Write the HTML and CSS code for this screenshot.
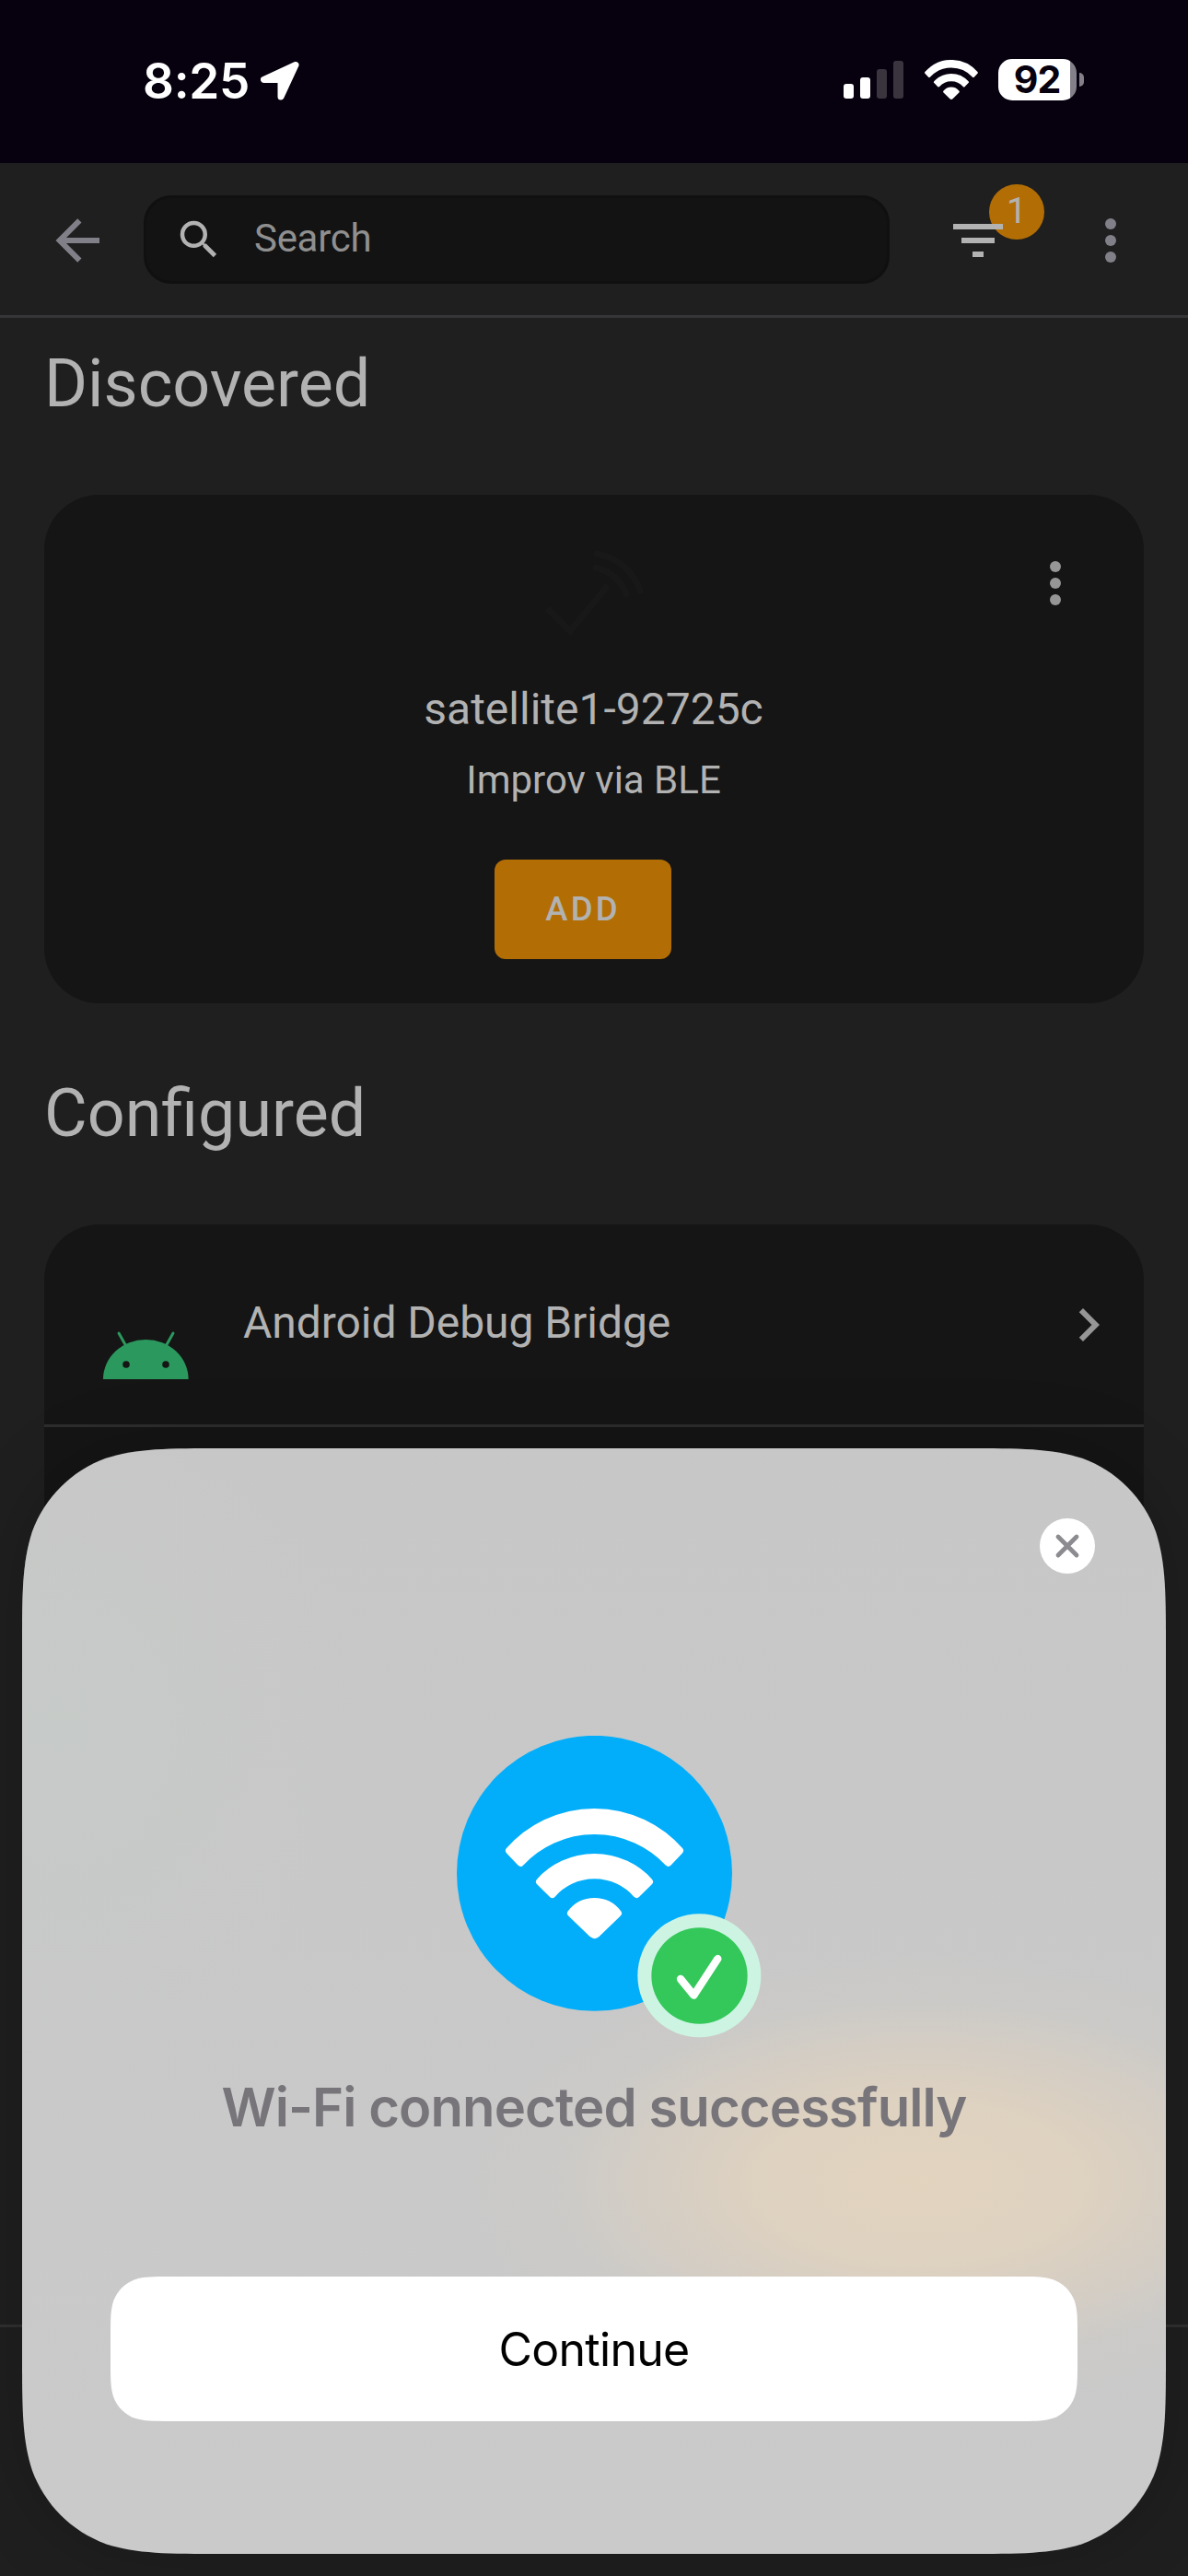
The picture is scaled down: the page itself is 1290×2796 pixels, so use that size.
FILE: index.html
```html
<!DOCTYPE html>
<html lang="en">
<head>
<meta charset="utf-8">
<title>Integrations</title>
<link rel="stylesheet" href="styles.css">
</head>
<body>
<div class="screen">
  <header class="status">
    <div class="status-left">
      <span class="time">8:25</span>
      <svg class="location" width="42" height="42" viewBox="0 0 42 42"><path d="M38 3.500L3.500 19.500H22V38Z" fill="#fff" stroke="#fff" stroke-width="7" stroke-linejoin="round"/></svg>
    </div>
    <div class="status-right">
      <svg class="signal" width="66" height="42" viewBox="0 0 66 42">
        <rect x="0" y="25" width="11" height="16" rx="3" fill="#fff"/>
        <rect x="18" y="18" width="11" height="23" rx="3" fill="#fff"/>
        <rect x="36" y="9" width="11" height="32" rx="3" fill="#3a343f"/>
        <rect x="54" y="0" width="11" height="41" rx="3" fill="#3a343f"/>
      </svg>
      <svg class="wifi" width="58" height="43" viewBox="296 339 582 424" preserveAspectRatio="none"><use href="#wifi-glyph"/></svg>
      <div class="battery"><span class="level">92</span></div>
      <span class="battery-cap"></span>
    </div>
  </header>

  <nav class="toolbar">
    <svg class="back" width="72" height="72" viewBox="0 0 24 24"><path fill="#818089" d="M20,11V13H8L13.5,18.5L12.08,19.92L4.16,12L12.08,4.08L13.5,5.5L8,11H20Z"/></svg>
    <div class="search">
      <svg width="54" height="54" viewBox="0 0 24 24"><path fill="#b2b2b2" d="M9.5,3A6.5,6.5 0 0,1 16,9.5C16,11.11 15.41,12.59 14.44,13.73L14.71,14H15.5L20.5,19L19,20.5L14,15.5V14.71L13.73,14.44C12.59,15.41 11.11,16 9.5,16A6.5,6.5 0 0,1 3,9.5A6.5,6.5 0 0,1 9.5,3M9.5,5C7,5 5,7 5,9.5C5,12 7,14 9.5,14C12,14 14,12 14,9.5C14,7 12,5 9.5,5Z"/></svg>
      <span>Search</span>
    </div>
    <div class="filter">
      <span class="count">1</span>
      <svg class="filter-icon" width="72" height="72" viewBox="0 0 24 24"><path fill="#b2b2b2" d="M3,6H21V8H3ZM6,11H18V13H6ZM10,16H14V18H10Z"/></svg>
    </div>
    <svg class="menu" width="72" height="72" viewBox="0 0 24 24" fill="#818089"><circle cx="12" cy="6" r="2"/><circle cx="12" cy="12" r="2"/><circle cx="12" cy="18" r="2"/></svg>
  </nav>

  <main class="content">
    <h1 class="heading">Discovered</h1>
    <section class="card discovered">
      <svg class="card-menu" width="72" height="72" viewBox="0 0 24 24" fill="#969696"><circle cx="12" cy="6" r="2"/><circle cx="12" cy="12" r="2"/><circle cx="12" cy="18" r="2"/></svg>
      <svg class="brand" width="120" height="120" viewBox="585 585 120 120" fill="none" stroke="#181818" stroke-width="7" stroke-linecap="round"><path d="M597 663L619 685L658 638" stroke-linecap="square"/><path d="M647 616Q671 622 680 645M648 601Q683 608 695 641"/></svg>
      <div class="device">satellite1-92725c</div>
      <div class="source">Improv via BLE</div>
      <button class="add">ADD</button>
    </section>

    <h1 class="heading">Configured</h1>
    <section class="card configured">
      <div class="row">
        <svg class="android" width="94" height="54" viewBox="111 1444 94 54"><path d="M112 1497A46.300 43 0 0 1 204.600 1497Z" fill="#2b985e"/><path d="M129 1447L138 1463M188 1447L179 1463" stroke="#2b985e" stroke-width="3" stroke-linecap="round"/><circle cx="137" cy="1481" r="3.800" fill="#151515"/><circle cx="180" cy="1481" r="3.800" fill="#151515"/></svg>
        <span class="name">Android Debug Bridge</span>
        <svg class="chevron" width="72" height="72" viewBox="0 0 24 24"><path fill="#969696" d="M8.59,16.58L13.17,12L8.59,7.41L10,6L16,12L10,18L8.59,16.58Z"/></svg>
      </div>
    </section>
  </main>
  <footer class="bottom-bar"></footer>

  <div class="sheet-layer">
    <section class="sheet">
      <button class="close" aria-label="Close"><svg width="60" height="60" viewBox="0 0 60 60"><path d="M20 20L40 40M40 20L20 40" stroke="#8b8b90" stroke-width="4.800" stroke-linecap="round"/></svg></button>
      <svg class="hero" width="334" height="328" viewBox="138 102 1002 984">
        <circle cx="586.500" cy="550" r="448.500" fill="#02aefa"/>
        <g id="wifi-glyph" fill="#fff" stroke="#fff" stroke-width="24" stroke-linejoin="round">
          <path d="M309 476A370 370 0 0 1 864 476L827 515A330 330 0 0 0 346 515Z"/>
          <path d="M408 577A241 241 0 0 1 765 577L724 618A183.500 183.500 0 0 0 449 618Z"/>
          <path d="M510 680A96 96 0 0 1 663 680L594 747Q587 753 580 747Z"/>
        </g>
        <circle cx="928" cy="883" r="201" fill="#cdf4e3"/>
        <circle cx="928.500" cy="883.500" r="156.500" fill="#34c85a"/>
        <path d="M867 894L910 947L988 828" fill="none" stroke="#fff" stroke-width="25" stroke-linecap="round" stroke-linejoin="round"/>
      </svg>
      <h2 class="message">Wi-Fi connected successfully</h2>
      <button class="continue">Continue</button>
    </section>
  </div>
</div>
</body>
</html>
```
FILE: styles.css
```css
* { box-sizing: border-box; }

body { margin: 0; background: #1f1f1f; }

button { border: 0; padding: 0; margin: 0; }

svg { display: block; flex: none; }

.screen {
  position: relative;
  display: flex;
  flex-direction: column;
  width: 1290px;
  height: 2796px;
  overflow: hidden;
  background: #1f1f1f;
  color: #b2b2b2;
  font-family: Roboto, sans-serif;
}

/* Status bar */
.status {
  flex: none;
  display: flex;
  justify-content: space-between;
  height: 177px;
  padding: 64px 113px 0 155px;
  background: #07000e;
  color: #fff;
  font-family: Inter, sans-serif;
}

.status-left, .status-right { display: flex; align-items: flex-start; }

.time {
  width: 128px;
  font-size: 53px;
  font-weight: 600;
  line-height: 48px;
  letter-spacing: -.3px;
}

.location { margin-top: 3px; }
.signal { margin: 2px 22px 0 0; }
.wifi { margin: 1px 22px 0 0; }

.battery {
  width: 85px;
  height: 45px;
  margin-right: 3px;
  padding-right: 1px;
  border-radius: 15px;
  background: linear-gradient(90deg, #fff 78px, #84808a 78px);
  color: #07000e;
  text-align: center;
}

.level {
  font-size: 41px;
  font-weight: 700;
  line-height: 45px;
  letter-spacing: -1px;
}

.battery-cap {
  width: 5px;
  height: 15px;
  margin-top: 15px;
  border-radius: 0 5px 5px 0;
  background: #84808a;
}

/* Toolbar */
.toolbar {
  flex: none;
  display: flex;
  align-items: flex-start;
  height: 168px;
  padding: 35px 48px 0;
  border-bottom: 3px solid #363638;
}

.back, .menu { margin-top: 13px; }

.search {
  display: flex;
  align-items: center;
  width: 810px;
  height: 96px;
  margin-left: 36px;
  padding: 0 30px 4px;
  border: 3px solid #101010;
  border-radius: 30px;
  background: #131313;
  color: #8f8f8f;
  font-size: 42px;
  letter-spacing: -.3px;
}

.search svg { margin-top: 4px; }

.search span { margin-left: 33px; }

.filter {
  position: relative;
  width: 108px;
  height: 96px;
  margin-left: 60px;
  padding-top: 13px;
}

.filter-icon { position: relative; }

.count {
  position: absolute;
  left: 48px;
  top: -12px;
  width: 60px;
  height: 60px;
  border-radius: 50%;
  background: #b26e05;
  font-size: 39px;
  line-height: 58px;
  text-align: center;
}

.menu { margin-left: 36px; }

/* Content */
.content { flex: none; height: 2178px; padding: 0 48px; overflow: hidden; }

.heading {
  margin: 0;
  height: 192px;
  padding-top: 30px;
  font-size: 71.800px;
  font-weight: 400;
  line-height: 84px;
}

.card { border-radius: 60px; background: #151515; }

.discovered {
  position: relative;
  display: flex;
  flex-direction: column;
  align-items: center;
  height: 552px;
  margin-bottom: 48px;
  padding-top: 48px;
}

.card-menu { position: absolute; left: 1062px; top: 60px; }

.device { margin: 37px 1px 0 0; font-size: 48px; line-height: 56px; }

.source { margin: 25px 1px 0 0; font-size: 42px; line-height: 48px; }

.add {
  width: 192px;
  height: 108px;
  margin: 62px 24px 0 0;
  border-radius: 12px;
  background: #b26e05;
  color: #b2b2b2;
  font: 500 36.500px/108px Roboto, sans-serif;
  letter-spacing: 3.200px;
}

.configured { height: 1300px; }

.row {
  display: flex;
  align-items: center;
  height: 220px;
  padding: 0 24px 0 63px;
  border-bottom: 3px solid #2d2d2d;
}

.android { margin-top: 66px; }

.name {
  flex: 1;
  margin: -5px 0 0 59px;
  font-size: 48px;
  letter-spacing: -.05px;
}

.bottom-bar { flex: 1; border-top: 3px solid #303030; background: #1f1f1f; }

/* Modal sheet */
.sheet-layer {
  position: absolute;
  left: 24px;
  top: 1572px;
  filter: drop-shadow(0 0 36px rgba(0, 0, 0, .2));
}

.sheet {
  display: flex;
  flex-direction: column;
  align-items: center;
  width: 1242px;
  height: 1200px;
  padding-top: 76px;
  background:
    radial-gradient(500px 250px at 975px 797px, rgba(227, 212, 190, .95), rgba(225, 211, 191, .88) 35%, rgba(219, 208, 193, .7) 56%, rgba(210, 205, 197, .35) 78%, rgba(201, 201, 201, 0)),
    radial-gradient(320px 360px at 40px 300px, rgba(198, 203, 200, .8), rgba(200, 200, 200, 0)),
    linear-gradient(#c7c7c7, #cacaca);
  clip-path: path("M220.13 0H1021.87C1085.26 0 1116.95 0 1151.06 10.79C1188.31 24.34 1217.66 53.69 1231.21 90.94C1242 125.05 1242 156.74 1242 220.13V979.87C1242 1043.26 1242 1074.95 1231.21 1109.06C1217.66 1146.31 1188.31 1175.66 1151.06 1189.21C1116.95 1200 1085.26 1200 1021.87 1200H220.13C156.74 1200 125.05 1200 90.94 1189.21C53.69 1175.66 24.34 1146.31 10.79 1109.06C0 1074.95 0 1043.26 0 979.87V220.13C0 156.74 0 125.05 10.79 90.94C24.34 53.69 53.69 24.34 90.94 10.79C125.05 0 156.74 0 220.13 0Z");
}

.close {
  align-self: flex-end;
  width: 60px;
  height: 60px;
  margin-right: 77px;
  border-radius: 50%;
  background: #fff;
}

.hero { margin: 176px 0 0 36px; }

.message {
  margin: 35px 0 0;
  color: #77757a;
  font: 600 58px/80px Inter, sans-serif;
  letter-spacing: -.9px;
  white-space: nowrap;
}

.continue {
  width: 1050px;
  height: 157px;
  margin-top: 144px;
  background: #fff;
  color: #000;
  font: 400 50px/158px Inter, sans-serif;
  letter-spacing: -.7px;
  clip-path: path("M64.2 0H985.8C1004.28 0 1013.53 0 1023.48 3.15C1034.34 7.1 1042.9 15.66 1046.85 26.52C1050 36.47 1050 45.72 1050 64.2V92.8C1050 111.28 1050 120.53 1046.85 130.48C1042.9 141.34 1034.34 149.9 1023.48 153.85C1013.53 157 1004.28 157 985.8 157H64.2C45.72 157 36.47 157 26.52 153.85C15.66 149.9 7.1 141.34 3.15 130.48C0 120.53 0 111.28 0 92.8V64.2C0 45.72 0 36.47 3.15 26.52C7.1 15.66 15.66 7.1 26.52 3.15C36.47 0 45.72 0 64.2 0Z");
}
```
